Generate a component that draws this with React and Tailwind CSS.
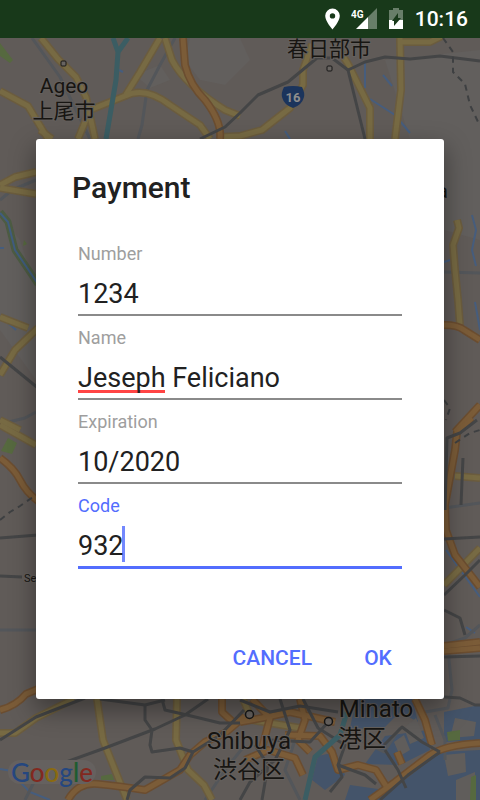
import React, { useState } from 'react';

const YELLOW = [
  'M41 38L58 59L76 77L86 97L95 139',
  'M160 38L140 72L125 96L90 110L78 139',
  'M125 96Q145 86 170 105L200 125L210 139',
  'M0 91L28 106L48 139',
  'M165 38L172 60Q185 85 225 110L240 116',
  'M312 44L303 70L303 85L290 108L262 130L240 136L220 137',
  'M338 48L348 64L370 108L370 139',
  'M400 38L401 90L395 139',
  'M400 42L430 42L442 36',
  'M40 130L52 139',
  'M0 185L15 177L36 172',
  'M0 188L36 194',
  'M0 317L28 328',
  'M38 328L15 350L0 375',
  'M0 420L20 430',
  'M0 425L36 445',
  'M0 733L15 733L36 718L74 699',
  'M97 699L103 740L115 770L127 800',
  'M177 699L176 740L188 770L204 785L212 800',
  'M457 220L459 228L453 245L455 270L458 300L460 325',
  'M455 476L480 478',
  'M444 585L480 548',
  'M243 699L252 720L300 728',
];

const ORANGE = [
  'M183 38L185 65Q190 85 205 100Q222 122 220 139',
  'M0 458Q14 468 20 480T38 501',
  'M0 710Q16 706 26 694L38 689',
  'M68 800Q78 782 98 784T145 790L180 770L190 755L205 742L225 733L245 716',
  'M222 699L222 712L235 724',
  'M444 325Q458 325 464 330L480 340',
  'M455 432L480 405',
  'M472 418L457 432L455 450L445 505L446 530L455 555L480 587',
  'M444 646L480 642',
  'M444 651L480 648',
  'M240 722L262 718L290 712L335 722',
  'M252 699L270 718L262 748',
  'M300 699L305 720L298 740L310 752',
  'M285 735L320 736L332 752L338 770L358 765L376 770L386 786',
  'M370 800L395 782L430 755Q445 745 480 743',
  'M415 699L425 720L432 745',
  'M397 752L402 764',
  'M245 760L268 750L295 758L303 775',
];

const DARK = [
  'M200 139L225 127L240 113L258 95L288 82L317 58L332 58L348 70L365 62L385 57L410 59L440 56L480 61',
  'M348 70L365 139',
  'M0 357L38 388',
  'M0 538L38 535',
  'M0 576L22 577',
  'M0 740L36 717L85 698',
  'M55 766L105 748L155 729L185 715L208 699',
  'M100 699L145 705L165 700',
  'M145 705L145 720L152 730L150 745L152 752L180 748L193 752',
  'M162 699L165 710L187 715L220 723L240 723',
  'M127 800L130 790L145 777L170 778L185 768L193 752L220 735L244 710',
  'M477 420L460 433L447 438L445 510',
  'M463 458L461 505',
  'M444 539L480 537',
  'M444 595L465 575L480 560',
  'M444 610L460 618L465 635',
  'M444 657L480 656',
  'M444 697L460 698L475 705L480 705',
  'M240 700L270 712L300 706L338 712',
  'M280 699L290 730L275 760L250 782L240 800',
  'M303 699L318 728L345 745L338 765L342 777L330 792',
  'M270 740L310 742L332 718',
  'M255 745L268 765L262 800',
  'M338 765L365 775L376 784',
  'M380 800L408 775L440 752',
  'M385 750L398 770L406 788',
  'M384 745L402 727L422 742L440 752',
];

const GREY = [
  'M32 38L60 77L90 139',
  'M175 38L160 65L147 90L142 125L138 139',
  'M0 200L12 190L36 180',
  'M0 424L25 418L36 412',
  'M0 630L36 630',
  'M25 800L35 780L55 766',
  'M444 272L480 273',
  'M444 508L480 503',
  'M480 625L465 638L450 643L449 660L452 690L448 708L425 712',
  'M205 800L225 770L245 745',
  'M295 740L285 770L300 800',
  'M360 740L384 752L400 728',
  'M435 715L445 740L445 760',
];

const STREAMS = [
  'M370 99L395 115L410 133',
  'M383 75L392 86',
  'M365 62L365 88',
  'M285 131L290 139',
  'M119 70L123 72',
  'M0 248L4 248',
  'M8 323L16 330',
  'M472 215L476 230L472 250L476 266',
  'M444 262L450 260',
  'M475 302L480 330',
  'M446 550L480 597',
  'M466 627L475 633',
  'M0 769L12 771',
  'M18 780L30 792L50 800',
];

function Lines({ paths, className, width }) {
  return (
    <g className={className} strokeWidth={width}>
      {paths.map((d) => (
        <path key={d} d={d} />
      ))}
    </g>
  );
}

function MapBackground() {
  return (
    <svg
      className="absolute inset-0 h-full w-full bg-[#605b58]"
      viewBox="0 38 480 762"
      preserveAspectRatio="xMidYMid slice"
      aria-label="Map"
    >
      <g className="fill-[#625f5d]">
        <path d="M190 38L240 38L250 60L225 85L200 80L185 60Z" />
        <path d="M385 60L480 50L480 139L410 139Z" />
        <path d="M0 215L20 240L36 290L36 380L0 330Z" />
        <path d="M444 139L480 139L480 240L444 230Z" />
        <path d="M135 75L160 65L170 80L150 88Z" />
      </g>
      <g className="fill-[#44546a]">
        <path d="M345 800L350 785L385 790L440 752L480 750L480 800Z" />
        <path d="M356 699L412 699L418 722L400 712L382 730L350 728Z" />
        <path d="M385 736L428 730L430 750L400 765L365 764Z" />
        <path d="M444 712L480 705L480 740L444 742Z" />
        <path d="M318 756L336 752L345 775L325 790L312 780Z" />
      </g>
      <g className="fill-[#605d5b]">
        <path d="M444 755L465 753L466 772L448 776Z" />
        <path d="M456 780L475 772L475 800L456 800Z" />
        <path d="M404 728L416 718L424 738L410 744Z" />
        <path d="M455 718L476 722L474 736L450 738Z" />
        <path d="M394 742L404 735L410 750L400 756Z" />
      </g>
      <g className="fill-[#56693f]">
        <path d="M8 438L17 443L12 454L1 451Z" />
        <path d="M0 43L13 60L10 63L0 56Z" />
        <path d="M24 240L27 244L23 246Z" />
        <path d="M101 776L112 774L114 780L101 780Z" />
        <path d="M447 732L460 730L460 740L448 741Z" />
        <path d="M471 777L476 775L476 800L470 800Z" />
      </g>
      <g fill="none" strokeLinejoin="round">
        <path d="M0 212L8 222L15 250L38 284" className="stroke-[#4d5c43]" strokeWidth="7" />
        <path d="M0 213L8 222L15 250L38 284" className="stroke-[#405d80]" strokeWidth="2" />
        <Lines paths={STREAMS} className="stroke-[#465d7d]" width="2" />
        <Lines paths={GREY} className="stroke-[#53565a]" width="3" />
        <Lines paths={YELLOW} className="stroke-[#6b5c3e]" width="8" />
        <Lines paths={YELLOW} className="stroke-[#776a43]" width="5" />
        <Lines paths={ORANGE} className="stroke-[#6b4d30]" width="8" />
        <Lines paths={ORANGE} className="stroke-[#7b5c38]" width="5" />
        <Lines paths={DARK} className="stroke-[#444546]" width="3" />
        <g className="stroke-[#3b5d63]" strokeWidth="5">
          <path d="M113 38L118 52L116 80L106 139M128 38L118 52" />
          <path d="M305 800L315 757L340 735L347 712" />
        </g>
        <g className="stroke-[#3e4042]" strokeWidth="2" strokeDasharray="6 5">
          <path d="M443 38L453 52L453 72L465 84L470 105L480 126" />
          <path d="M0 520L10 512L20 506L36 495" />
          <path d="M444 400L450 408L446 420" />
          <path d="M455 443L470 433L480 430" />
        </g>
        <g className="fill-[#686461] stroke-[#171717]" strokeWidth="2">
          <rect x="61" y="61" width="5" height="5" rx="1" strokeWidth="1" />
          <rect x="327" y="66" width="5" height="5" rx="1" strokeWidth="1" />
          <circle cx="249.500" cy="714.500" r="4" strokeWidth="1.500" />
          <circle cx="328.500" cy="721.500" r="4" strokeWidth="1.500" />
        </g>
      </g>
      <path
        d="M284 87Q293 85 302 87Q305 93 304 97Q302 105 293 108Q284 105 282 97Q281 93 284 87Z"
        className="fill-[#1b345c]"
      />
      <text
        x="293"
        y="102"
        textAnchor="middle"
        className="fill-[#8d8d8d] font-['Roboto',sans-serif] text-[13px] font-bold"
      >
        16
      </text>
      <g
        textAnchor="middle"
        strokeWidth="2"
        className="fill-[#171512] stroke-[#64605d] font-['Roboto','Noto_Sans_CJK_JP',sans-serif] [paint-order:stroke]"
      >
        <text x="64" y="93" className="text-[21px]">Ageo</text>
        <text x="64" y="118" className="text-[21px]">上尾市</text>
        <text x="329" y="56" className="text-[21px]">春日部市</text>
        <text x="249" y="749" className="text-[24px]">Shibuya</text>
        <text x="249" y="778" className="text-[24px]">渋谷区</text>
        <text x="376" y="717" className="text-[24px]">Minato</text>
        <text x="362" y="747" className="text-[24px]">港区</text>
        <text x="24" y="582" textAnchor="start" className="text-[11px]">Setagaya</text>
        <text x="448" y="198" textAnchor="end" className="text-[21px]">Noda</text>
      </g>
      <path
        d="M20 772H84"
        className="stroke-[#65615f]"
        strokeWidth="24"
        strokeLinecap="round"
      />
      <text x="11" y="782" className="font-['Lato',sans-serif] text-[26px] font-medium">
        <tspan className="fill-[#25477f]">G</tspan>
        <tspan className="fill-[#82291f]">o</tspan>
        <tspan className="fill-[#8a6a10]">o</tspan>
        <tspan className="fill-[#25477f]">g</tspan>
        <tspan className="fill-[#1d5c30]">l</tspan>
        <tspan className="fill-[#82291f]">e</tspan>
      </text>
    </svg>
  );
}

function StatusBar() {
  return (
    <header className="flex h-[38px] items-center justify-end gap-[11px] bg-[#18391a] px-3 text-white">
      <svg width="15" height="22" viewBox="0 0 15 22" fill="currentColor" aria-hidden="true">
        <path
          fillRule="evenodd"
          d="M7.500 0.500A7.300 7.300 0 0 0 0.200 7.800C0.200 13.200 7.500 21.500 7.500 21.500S14.800 13.200 14.800 7.800A7.300 7.300 0 0 0 7.500 0.500ZM7.500 5.200A2.700 2.700 0 1 1 7.500 10.600A2.700 2.700 0 1 1 7.500 5.200Z"
        />
      </svg>
      <svg width="27" height="22" viewBox="0 0 27 22" fill="currentColor" aria-label="4G signal">
        <path d="M26 0V21H17V9Z" opacity="0.35" />
        <path d="M17 9V21H5Z" />
        <text x="0" y="10" className="font-['Roboto',sans-serif] text-[10px] font-bold">
          4G
        </text>
      </svg>
      <svg width="15" height="22" viewBox="0 0 15 22" fill="currentColor" aria-hidden="true">
        <path d="M0 2H4V0H10V2H14V12H0Z" opacity="0.35" />
        <path d="M0 12H14V21H0Z" />
        <path d="M9 5V10H12L5 18V13H3Z" className="fill-[#18391a]" />
      </svg>
      <time className="text-[21px] leading-6 font-medium">10:16</time>
    </header>
  );
}

function Field({ id, label, value, onChange, active, children }) {
  return (
    <div className="flex flex-col">
      <label
        htmlFor={id}
        className={`text-lg leading-6 ${active ? 'text-[#536dfe]' : 'text-[#9e9e9e]'}`}
      >
        {label}
      </label>
      <div
        className={`relative pt-2 ${
          active ? 'border-b-3 border-[#536dfe]' : 'mb-2.5 border-b-2 border-[#8a8a8a]'
        }`}
      >
        {children}
        <input
          id={id}
          type="text"
          value={value}
          onChange={(e) => onChange(e.target.value)}
          className="relative block h-10 w-full bg-transparent text-[27px] text-[#212121] outline-none"
        />
      </div>
    </div>
  );
}

function PaymentDialog() {
  const [number, setNumber] = useState('1234');
  const [name, setName] = useState('Jeseph Feliciano');
  const [expiration, setExpiration] = useState('10/2020');
  const [code, setCode] = useState('932');

  return (
    <form
      role="dialog"
      aria-labelledby="payment-title"
      onSubmit={(e) => e.preventDefault()}
      className="relative mx-9 flex w-full flex-col rounded-[3px] bg-white pt-[29px] pb-[13px] shadow-[0_10px_24px_2px_rgba(0,0,0,0.35)]"
    >
      <h1 id="payment-title" className="px-9 text-[30px] leading-10 font-medium text-[#212121]">
        Payment
      </h1>
      <div className="mt-[34px] flex flex-col px-[42px]">
        <Field id="number" label="Number" value={number} onChange={setNumber} />
        <Field id="name" label="Name" value={name} onChange={setName}>
          <span className="absolute bottom-[5px] left-0 h-[3px] w-[87px] bg-[#ff4444]" />
        </Field>
        <Field id="expiration" label="Expiration" value={expiration} onChange={setExpiration} />
        <Field id="code" label="Code" value={code} onChange={setCode} active>
          <span className="absolute bottom-1 left-11 h-9 w-[3px] bg-[#7388fe]" />
        </Field>
      </div>
      <div className="mt-[63px] flex justify-end gap-1.5 pr-[18px] text-[21px] font-medium text-[#536dfe]">
        <button type="button" className="h-[54px] min-w-24 px-3">
          CANCEL
        </button>
        <button type="submit" className="h-[54px] min-w-24 px-3">
          OK
        </button>
      </div>
    </form>
  );
}

export default function App() {
  return (
    <div className="flex min-h-screen flex-col font-['Roboto',sans-serif]">
      <StatusBar />
      <main className="relative flex flex-1 items-center justify-center overflow-hidden">
        <MapBackground />
        <PaymentDialog />
      </main>
    </div>
  );
}
